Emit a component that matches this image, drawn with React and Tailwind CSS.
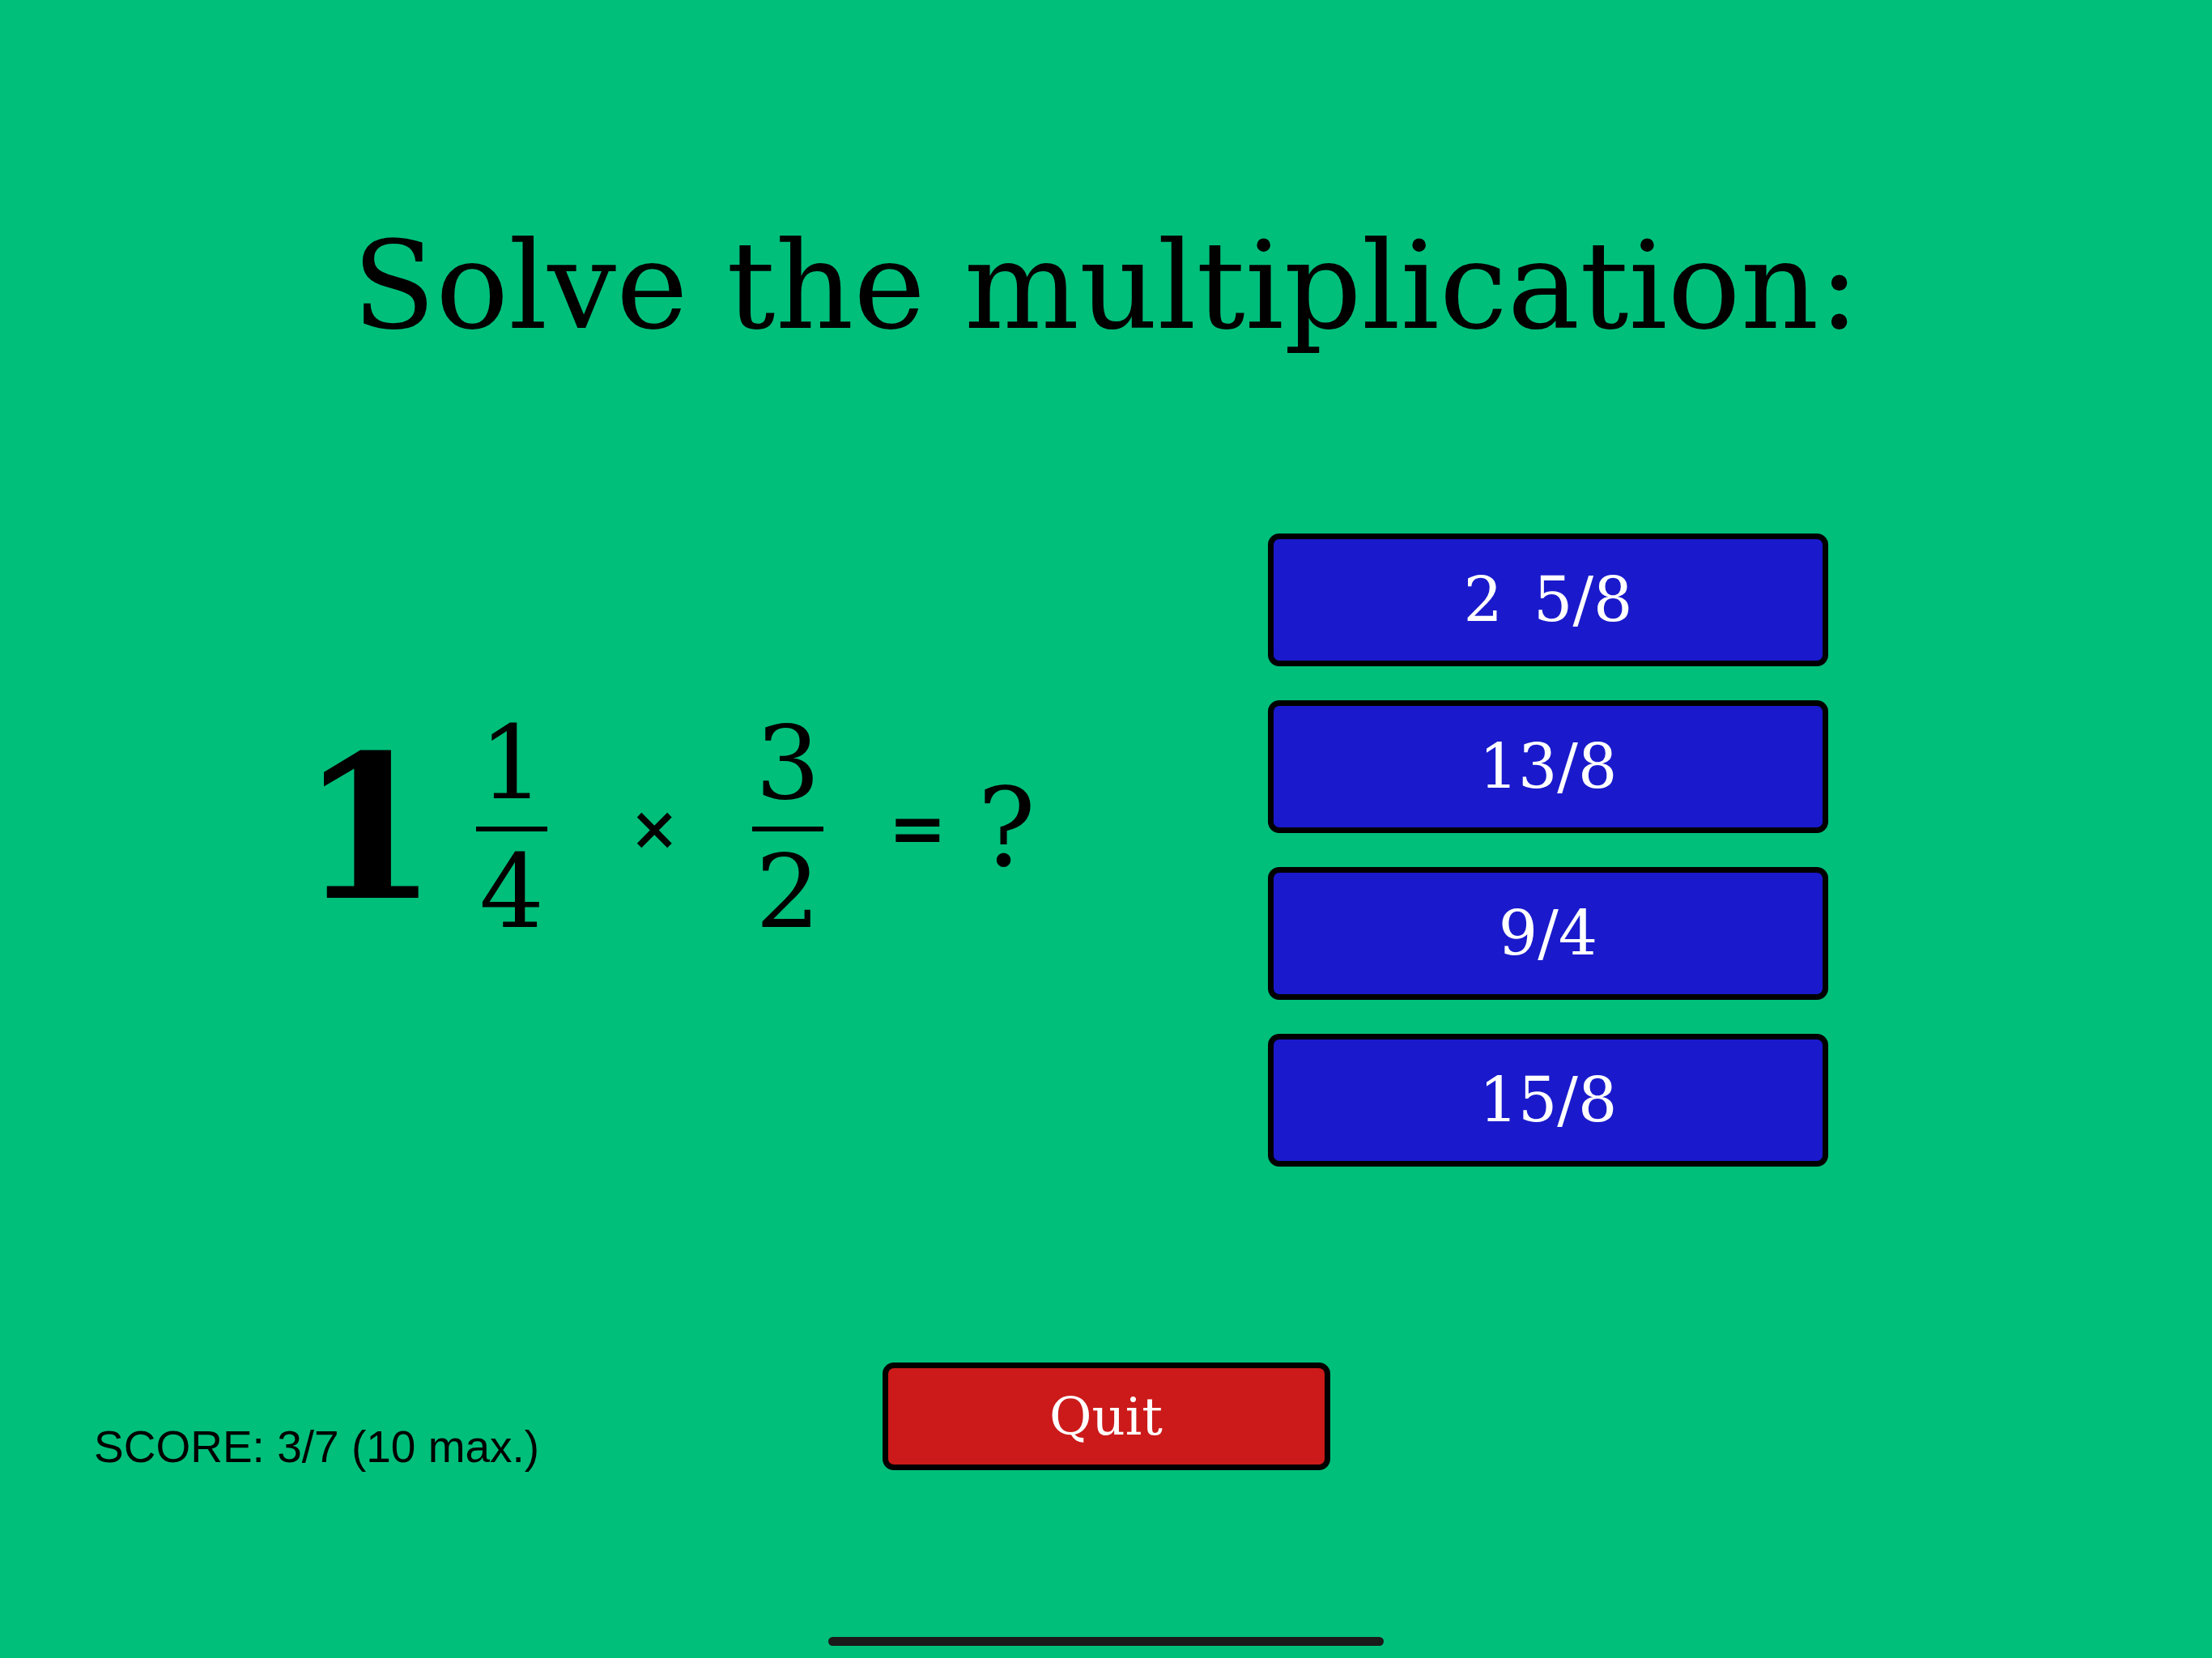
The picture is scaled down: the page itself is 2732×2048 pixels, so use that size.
const serif = { fontFamily: '"DejaVu Serif", "Liberation Serif", serif' };

function Fraction({ top, bottom }) {
  return (
    <div className="flex flex-col items-center">
      <span className="text-[126px] leading-none">{top}</span>
      <div className="mt-[15px] h-[6px] w-[88px] bg-black" />
      <span className="mt-[12px] text-[126px] leading-none">{bottom}</span>
    </div>
  );
}

function AnswerButton({ label }) {
  return (
    <button className="flex h-[164px] w-[692px] items-center justify-center rounded-[14px] border-[7px] border-black bg-[#1a1acc] text-[76px] leading-none text-white [word-spacing:14px]">
      {label}
    </button>
  );
}

export default function App() {
  const answers = ["2 5/8", "13/8", "9/4", "15/8"];

  return (
    <div
      className="flex h-[2048px] w-[2732px] flex-col overflow-hidden bg-[#00bf7b] text-black"
      style={serif}
    >
      <h1 className="pt-[278px] text-center text-[150px] font-normal leading-none">
        Solve the multiplication:
      </h1>

      <div className="mt-[231px] flex items-start">
        <div className="ml-[370px] mt-[221px] flex items-center">
          <span className="text-[246px] font-bold leading-none">1</span>
          <div className="ml-[47px]">
            <Fraction top="1" bottom="4" />
          </div>
          <span className="ml-[101px] text-[74px] font-bold leading-none">×</span>
          <div className="ml-[90px]">
            <Fraction top="3" bottom="2" />
          </div>
          <span className="ml-[80px] text-[86px] font-bold leading-none">=</span>
          <span className="ml-[38px] text-[134px] leading-none">?</span>
        </div>

        <div className="ml-auto mr-[474px] flex flex-col gap-[42px]">
          {answers.map((a) => (
            <AnswerButton key={a} label={a} />
          ))}
        </div>
      </div>

      <div className="mt-[242px] grid grid-cols-[1fr_auto_1fr] items-start">
        <div
          className="pl-[116px] pt-[77px] text-[55px] leading-none"
          style={{ fontFamily: '"Liberation Sans", Arial, sans-serif' }}
        >
          SCORE: 3/7 (10 max.)
        </div>
        <button className="flex h-[133px] w-[553px] items-center justify-center rounded-[14px] border-[7px] border-black bg-[#cc1a1a] text-[64px] leading-none text-white">
          Quit
        </button>
        <div />
      </div>

      <div className="mx-auto mt-[206px] h-[11px] w-[686px] rounded-full bg-[#1a1a1a]" />
    </div>
  );
}
